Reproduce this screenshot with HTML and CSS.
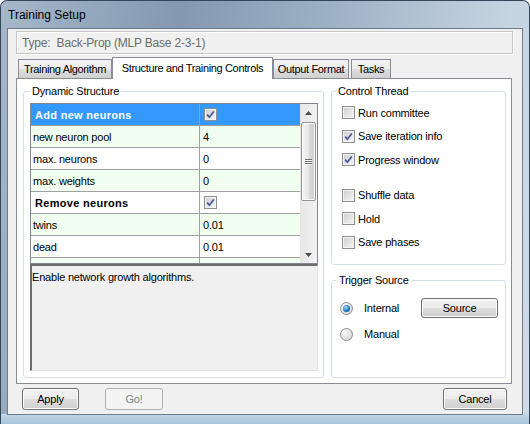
FILE: index.html
```html
<!DOCTYPE html>
<html lang="en">
<head>
    <meta charset="UTF-8">
    <title>Training Setup</title>
    <link rel="stylesheet" href="styles.css">
</head>
<body>
    <div class="window">
        <div class="titlebar">Training Setup</div>
        <div class="client">
            <div class="type-box">Type:&nbsp; Back-Prop (MLP Base 2-3-1)</div>

            <div class="tabs">
                <div class="tab tab-algorithm">Training Algorithm</div>
                <div class="tab active">Structure and Training Controls</div>
                <div class="tab tab-output">Output Format</div>
                <div class="tab tab-tasks">Tasks</div>
            </div>

            <div class="tab-panel">
                <fieldset class="group dynamic">
                    <legend>Dynamic Structure</legend>
                    <div class="grid">
                        <div class="grid-rows">
                            <div class="row category selected">
                                <span class="name">Add new neurons</span>
                                <span class="value"><span class="check checked"><svg viewBox="0 0 11 11"><path d="M2.2 5.6 L4.4 8.2 L8.8 2.4"/></svg></span></span>
                            </div>
                            <div class="row alt"><span class="name">new neuron pool</span><span class="value">4</span></div>
                            <div class="row"><span class="name">max. neurons</span><span class="value">0</span></div>
                            <div class="row alt"><span class="name">max. weights</span><span class="value">0</span></div>
                            <div class="row category">
                                <span class="name">Remove neurons</span>
                                <span class="value"><span class="check checked"><svg viewBox="0 0 11 11"><path d="M2.2 5.6 L4.4 8.2 L8.8 2.4"/></svg></span></span>
                            </div>
                            <div class="row alt"><span class="name">twins</span><span class="value">0.01</span></div>
                            <div class="row"><span class="name">dead</span><span class="value">0.01</span></div>
                            <div class="row alt"><span class="name">&nbsp;</span><span class="value">&nbsp;</span></div>
                        </div>
                        <div class="scrollbar">
                            <div class="sb-btn"><svg viewBox="0 0 7 4"><polygon points="0,4 7,4 3.5,0"/></svg></div>
                            <div class="sb-thumb"><span class="grip"></span><span class="grip"></span><span class="grip"></span></div>
                            <div class="sb-track"></div>
                            <div class="sb-btn"><svg viewBox="0 0 7 4"><polygon points="0,0 7,0 3.5,4"/></svg></div>
                        </div>
                    </div>
                    <div class="description">Enable network growth algorithms.</div>
                </fieldset>

                <div class="side">
                    <fieldset class="group control">
                        <legend>Control Thread</legend>
                        <div class="check-list">
                            <label class="check-row"><span class="check"></span>Run committee</label>
                            <label class="check-row"><span class="check checked"><svg viewBox="0 0 11 11"><path d="M2.2 5.6 L4.4 8.2 L8.8 2.4"/></svg></span>Save iteration info</label>
                            <label class="check-row"><span class="check checked"><svg viewBox="0 0 11 11"><path d="M2.2 5.6 L4.4 8.2 L8.8 2.4"/></svg></span>Progress window</label>
                        </div>
                        <div class="check-list second">
                            <label class="check-row"><span class="check"></span>Shuffle data</label>
                            <label class="check-row"><span class="check"></span>Hold</label>
                            <label class="check-row"><span class="check"></span>Save phases</label>
                        </div>
                    </fieldset>

                    <fieldset class="group trigger">
                        <legend>Trigger Source</legend>
                        <div class="radio-row">
                            <span class="radio checked"></span>
                            <span class="radio-text">Internal</span>
                            <button class="btn source">Source</button>
                        </div>
                        <div class="radio-row">
                            <span class="radio"></span>
                            <span class="radio-text">Manual</span>
                        </div>
                    </fieldset>
                </div>
            </div>

            <div class="buttons">
                <button class="btn apply">Apply</button>
                <button class="btn go" disabled>Go!</button>
                <button class="btn cancel">Cancel</button>
            </div>
        </div>
    </div>
</body>
</html>
```

FILE: styles.css
```css
* {
    box-sizing: border-box;
}
body {
    margin: 0;
    font-family: "Liberation Sans", Arial, sans-serif;
    font-size: 11px;
    letter-spacing: -0.2px;
    color: #000;
}

/* window frame */
.window {
    width: 530px;
    height: 424px;
    display: flex;
    flex-direction: column;
    padding: 0 6px 9px;
    border: 1px solid #34465a;
    border-bottom: none;
    border-radius: 7px 7px 0 0;
    background:
        linear-gradient(#c2d6e8, #a9c4dc) bottom / 100% 10px no-repeat,
        linear-gradient(100deg, #a6b7c9 0%, #8299b1 30%, #9db1c5 55%, #c6d4e1 85%, #d0dbe6 100%);
}
.titlebar {
    height: 27px;
    display: flex;
    align-items: center;
    padding-left: 1px;
    font-size: 12px;
    letter-spacing: 0;
}
.client {
    flex: 1;
    display: flex;
    flex-direction: column;
    padding: 2px 9px 0 8px;
    background-color: #f0f0f0;
    border: 1px solid #6c7d90;
}

.type-box {
    height: 23px;
    display: flex;
    align-items: center;
    padding-left: 5px;
    font-size: 12px;
    color: #6d6d6d;
    border: 1px solid #c3c6ca;
    box-shadow: inset 1px 1px 0 #fff, 1px 1px 0 #fff;
}

/* tab strip */
.tabs {
    height: 21px;
    margin-top: 3px;
    padding-left: 2px;
    display: flex;
    align-items: flex-end;
}
.tab {
    height: 19px;
    display: flex;
    align-items: center;
    justify-content: center;
    letter-spacing: -0.35px;
    white-space: nowrap;
    border: 1px solid #898c95;
    border-bottom: none;
    background: linear-gradient(#f3f3f3, #ebebeb 50%, #dedede 50%, #d0d0d0);
}
.tab-algorithm {
    width: 94px;
}
.tab.active {
    width: 161px;
    height: 22px;
    margin-bottom: -1px;
    padding-bottom: 2px;
    background: #fff;
    position: relative;
    z-index: 1;
}
.tab-output {
    width: 76px;
}
.tab-tasks {
    width: 40px;
    margin-left: 2px;
}
.tab-panel {
    height: 306px;
    margin-right: 1px;
    display: flex;
    gap: 7px;
    padding: 6px 5px 5px 6px;
    background: #fff;
    border: 1px solid #898c95;
}

/* group boxes */
.group {
    margin: 0;
    min-width: 0;
    border: 1px solid #d5dfe5;
    border-radius: 3px;
}
.group legend {
    padding: 0 2px;
    line-height: 13px;
}
.dynamic {
    width: 301px;
    padding: 5px 5px 6px 6px;
}
.side {
    flex: 1;
    display: flex;
    flex-direction: column;
}
.control {
    height: 180px;
    padding: 3px 6px 10px 8px;
}
.control legend {
    margin-left: -4px;
}
.check-list {
    padding-left: 2px;
}
.check-list.second {
    margin-top: 12px;
}
.check-row {
    height: 23.5px;
    display: flex;
    align-items: center;
    gap: 3px;
}
.trigger {
    flex: 1;
    margin-top: 9px;
    padding: 10px 7px 0 8px;
}
.trigger legend {
    margin-left: -3px;
}

/* property grid */
.grid {
    height: 161px;
    display: flex;
    border: 1px solid #828790;
}
.grid-rows {
    flex: 1;
    overflow: hidden;
}
.row {
    height: 22px;
    display: flex;
    background: #fff;
    border-bottom: 1px solid #a0a0a0;
}
.row.alt {
    background: #f0fff0;
}
.row.selected {
    background: #3399ff;
    color: #fff;
}
.row .name {
    width: 169px;
    display: flex;
    align-items: center;
    padding-left: 2px;
    border-right: 1px solid #a0a0a0;
}
.row .value {
    flex: 1;
    display: flex;
    align-items: center;
    padding-left: 3px;
}
.row.category .name {
    font-weight: bold;
    letter-spacing: 0.3px;
    padding-left: 4px;
}
.row.category .value {
    padding-left: 4px;
}

.scrollbar {
    width: 17px;
    display: flex;
    flex-direction: column;
    background: linear-gradient(to right, #e6e6e6, #f2f2f2);
}
.sb-btn {
    height: 17px;
    display: flex;
    align-items: center;
    justify-content: center;
}
.sb-btn svg {
    width: 7px;
    height: 4px;
    fill: #4d4d4d;
}
.sb-thumb {
    height: 79px;
    margin: 1px 1px 0;
    display: flex;
    flex-direction: column;
    align-items: center;
    justify-content: center;
    gap: 1px;
    border: 1px solid #959595;
    border-radius: 2px;
    background: linear-gradient(to right, #f6f6f6, #e6e6e6 50%, #d9d9d9 50%, #cfcfcf);
    box-shadow: inset 0 0 0 1px #fbfbfb;
}
.grip {
    width: 7px;
    height: 1px;
    background: #6f6f6f;
    box-shadow: 0 1px 0 #fff;
}
.sb-track {
    flex: 1;
}

.description {
    height: 107px;
    padding: 5px 0 0 0;
    background: #f0f0f0;
    border: 1px solid #e3e3e3;
    border-top: 2px solid #6d6d6d;
    border-left: 2px solid #6d6d6d;
}

/* check boxes and radios */
.check {
    width: 13px;
    height: 13px;
    flex: none;
    display: flex;
    align-items: center;
    justify-content: center;
    border: 1px solid #8e8f8f;
    background: linear-gradient(135deg, #cdcdcd, #f6f6f6);
    box-shadow: inset 0 0 0 1px #f4f4f4;
}
.check svg {
    width: 11px;
    height: 11px;
    fill: none;
    stroke: #44599a;
    stroke-width: 1.7;
}
.radio-row {
    height: 22px;
    display: flex;
    align-items: center;
}
.radio-row + .radio-row {
    margin-top: 4px;
}
.radio {
    width: 13px;
    height: 13px;
    display: flex;
    align-items: center;
    justify-content: center;
    border: 1px solid #8e8f8f;
    border-radius: 50%;
    background: radial-gradient(circle at 35% 35%, #fbfbfb, #cdcdcd);
}
.radio.checked::after {
    content: "";
    width: 7px;
    height: 7px;
    border-radius: 50%;
    background: radial-gradient(circle at 40% 35%, #a6e1fb, #2279c4 55%, #0d3f7f);
}
.radio-text {
    margin-left: 11px;
}

/* push buttons */
.btn {
    height: 22px;
    padding: 0;
    font-family: inherit;
    font-size: 11px;
    letter-spacing: -0.2px;
    color: #000;
    border: 1px solid #707070;
    border-radius: 3px;
    background: linear-gradient(#f2f2f2, #ebebeb 50%, #dddddd 50%, #cfcfcf);
    box-shadow: inset 0 0 0 1px #fcfcfc;
}
.btn:disabled {
    color: #838383;
    border-color: #adb2b5;
    background: #f4f4f4;
    box-shadow: none;
}
.source {
    width: 77px;
    height: 20px;
    margin-left: auto;
}
.buttons {
    height: 22px;
    margin-top: 4px;
    display: flex;
}
.apply {
    width: 57px;
    margin-left: 6px;
}
.go {
    width: 58px;
    margin-left: 26px;
}
.cancel {
    width: 64px;
    margin-left: auto;
    margin-right: 6px;
}
```
